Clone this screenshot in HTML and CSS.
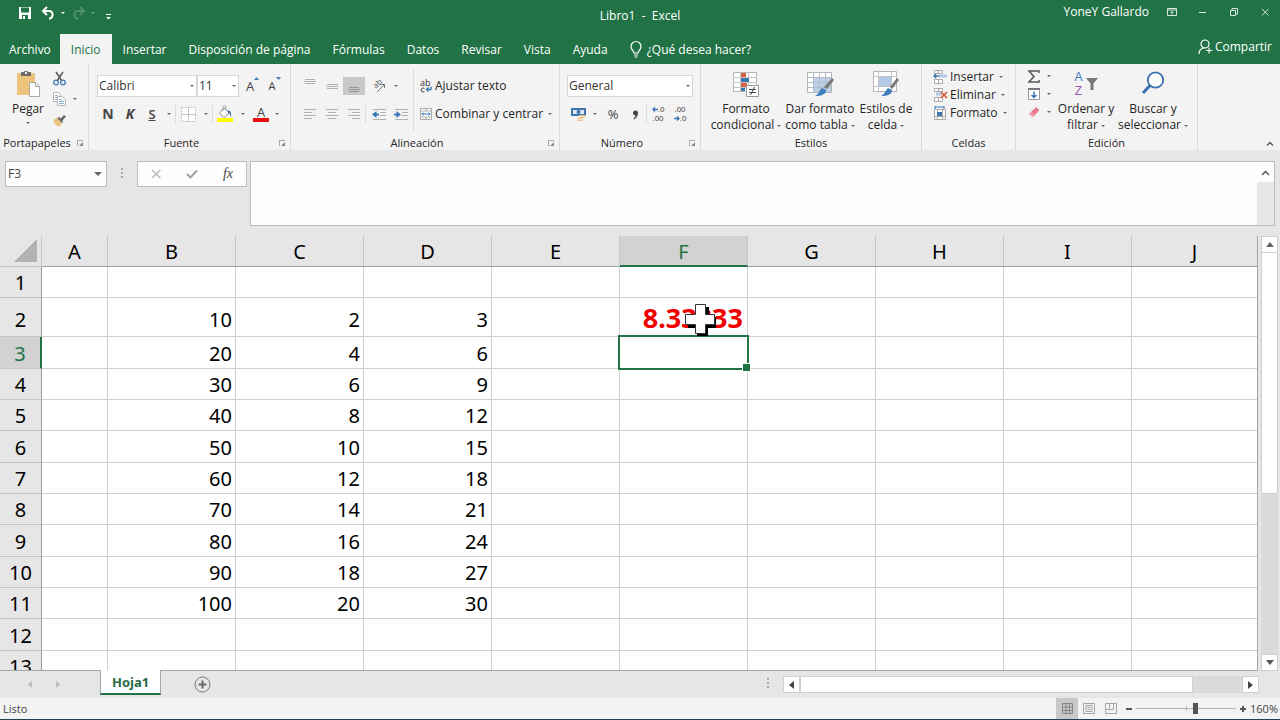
FILE: index.html
```html
<!DOCTYPE html>
<html lang="es">
<head>
    <meta charset="UTF-8">
    <meta name="viewport" content="width=device-width, initial-scale=1.0">
    <title>Libro1 - Excel</title>
    <link rel="stylesheet" href="styles.css">
</head>
<body>
    <header class="title-bar">
        <div class="quick-access">
            <button class="qa-btn" aria-label="Guardar"><svg width="14" height="14" viewBox="0 0 14 14"><path d="M1 1h12v12H1z" fill="#fff"/><path d="M3 1.500h8v5H3zM4 9h6v4H4z" fill="#217346"/><path d="M5 10h2v3H5z" fill="#fff"/></svg></button>
            <button class="qa-btn" aria-label="Deshacer"><svg width="15" height="14" viewBox="0 0 15 14"><path d="M2 5h7a4 4 0 0 1 0 7.500H8M6 1L2 5l4 4" fill="none" stroke="#fff" stroke-width="2"/></svg></button>
            <span class="caret light"></span>
            <button class="qa-btn" aria-label="Rehacer"><svg width="15" height="14" viewBox="0 0 15 14"><path d="M13 5H6a4 4 0 0 0 0 7.500h1M9 1l4 4-4 4" fill="none" stroke="#4d8f6b" stroke-width="2"/></svg></button>
            <span class="caret light faded"></span>
            <button class="qa-btn more" aria-label="Personalizar barra"><svg width="7" height="6" viewBox="0 0 7 6"><path d="M1 .5h5" stroke="#fff"/><path d="M1 3h5L3.500 5.500z" fill="#fff"/></svg></button>
        </div>
        <div class="doc-title">Libro1&nbsp; -&nbsp; Excel</div>
        <div class="window-area">
            <span class="user-name">YoneY Gallardo</span>
            <button class="win-btn" aria-label="Opciones de presentación"><svg width="10" height="8" viewBox="0 0 10 8"><path d="M.5.500h9v7h-9zM.500 2h9M5 6.500V3.500M3.500 5L5 3.500 6.500 5" fill="none" stroke="#d9e8df"/></svg></button>
            <button class="win-btn" aria-label="Minimizar"><svg width="8" height="8" viewBox="0 0 8 8"><path d="M0 4.500h7" stroke="#d9e8df"/></svg></button>
            <button class="win-btn" aria-label="Restaurar"><svg width="8" height="8" viewBox="0 0 8 8"><path d="M.5 2.500h5v5h-5zM2 2.500V.500h5.500v5.500H5.500" fill="none" stroke="#d9e8df"/></svg></button>
            <button class="win-btn" aria-label="Cerrar"><svg width="8" height="8" viewBox="0 0 8 8"><path d="M1 1l6.500 6.500M7.500 1L1 7.500" fill="none" stroke="#d9e8df"/></svg></button>
        </div>
    </header>

    <nav class="tabs">
        <a class="tab first" href="#">Archivo</a>
        <a class="tab active" href="#">Inicio</a>
        <a class="tab" href="#">Insertar</a>
        <a class="tab" href="#">Disposición de página</a>
        <a class="tab" href="#">Fórmulas</a>
        <a class="tab" href="#">Datos</a>
        <a class="tab" href="#">Revisar</a>
        <a class="tab" href="#">Vista</a>
        <a class="tab" href="#">Ayuda</a>
        <a class="tab tell-me" href="#"><svg width="12" height="17" viewBox="0 0 12 17"><path d="M4 12c0-2-3-3-3-6.500a5 5 0 0 1 10 0C11 9 8 10 8 12zM4 14h4M4.500 16h3" fill="none" stroke="#fff" stroke-width="1.200"/></svg>¿Qué desea hacer?</a>
        <a class="share" href="#"><svg width="15" height="16" viewBox="0 0 15 16"><circle cx="7" cy="5" r="4" fill="none" stroke="#fff" stroke-width="1.200"/><path d="M1 15c0-3 2-5.500 5-6M11 8.500v6M8 11.500h6.500" fill="none" stroke="#fff" stroke-width="1.200"/></svg>Compartir</a>
    </nav>

    <section class="ribbon">
        <div class="group g-clip">
            <div class="group-body">
                <button class="big-btn paste">
                    <svg width="24" height="27" viewBox="0 0 24 27"><path d="M1 3h18v22H1z" fill="#ecc27c"/><path d="M5 2h2.500a3 2.500 0 0 1 5 0H15v4H5z" fill="#6b6b6b"/><path d="M9 2h2v2H9z" fill="#f3f3f3"/><path d="M13.500 12.500h6l4 4v10h-10z" fill="#fff" stroke="#aaa"/><path d="M19.500 12.500v4h4" fill="none" stroke="#aaa"/></svg>
                    <span>Pegar</span>
                    <span class="caret"></span>
                </button>
                <div class="clip-col">
                    <button class="ic" aria-label="Cortar"><svg width="13" height="15" viewBox="0 0 13 15"><path d="M3 1l6 9M10 1L4 10" stroke="#555" stroke-width="1.500"/><circle cx="3" cy="11.500" r="2.300" fill="none" stroke="#4679b8" stroke-width="1.300"/><circle cx="10" cy="11.500" r="2.300" fill="none" stroke="#4679b8" stroke-width="1.300"/></svg></button>
                    <div class="pair"><button class="ic" aria-label="Copiar"><svg width="13" height="14" viewBox="0 0 13 14"><path d="M.5.500h5l2 2v7h-7z" fill="#fff" stroke="#b4b4b4"/><path d="M4.500 4.500h5l3 3v6h-8z" fill="#fff" stroke="#b4b4b4"/><path d="M2 3.500h3M2 5.500h2M2 7.500h2M6 7.500h3M6 9.500h5M6 11.500h5" stroke="#8fb3cc"/></svg></button><span class="caret"></span></div>
                    <button class="ic" aria-label="Copiar formato"><svg width="14" height="13" viewBox="0 0 14 13"><path d="M1 6l4-2 5 5-3 4-3-2-1-1-1-2z" fill="#ecc27c"/><path d="M5 4l2-1 1.500 1.500L12 1l2 1.500-3.500 4L11 8l-1 1z" fill="#666"/></svg></button>
                </div>
            </div>
            <div class="group-label">Portapapeles<i class="launcher"></i></div>
        </div>

        <div class="group g-font">
            <div class="group-body rows">
                <div class="row">
                    <label class="combo font-name"><select aria-label="Fuente"><option>Calibri</option></select></label>
                    <label class="combo font-size"><select aria-label="Tamaño de fuente"><option>11</option></select></label>
                    <button class="ic letter" aria-label="Aumentar tamaño">A<svg class="mark" width="5" height="3" viewBox="0 0 5 3"><path d="M0 3l2.500-3L5 3z" fill="#4679b8"/></svg></button>
                    <button class="ic letter small" aria-label="Disminuir tamaño">A<svg class="mark" width="5" height="3" viewBox="0 0 5 3"><path d="M0 0l2.500 3L5 0z" fill="#4679b8"/></svg></button>
                </div>
                <div class="row">
                    <button class="ic letter bold">N</button>
                    <button class="ic letter bold italic">K</button>
                    <button class="ic letter under">S</button>
                    <span class="caret"></span><i class="sep"></i>
                    <button class="ic borders" aria-label="Bordes"><svg width="15" height="15" viewBox="0 0 15 15"><path d="M.5.500h14v14H.500z" fill="#fff" stroke="#c4c4c4" stroke-dasharray="2 1"/><path d="M7.500 0v15M0 7.500h15" stroke="#c4c4c4"/></svg></button>
                    <span class="caret"></span><i class="sep"></i>
                    <button class="ic fill" aria-label="Color de relleno"><svg width="16" height="16" viewBox="0 0 16 16"><path d="M7 2l5 5-5 4.500L2.500 7z" fill="#fff" stroke="#888"/><path d="M6 5V1.500a1.500 1.500 0 0 1 3 0V4" fill="none" stroke="#999"/><path d="M11 4c3 1 3.500 3 3 7-1-1-1-4-3-5z" fill="#4679b8"/><path d="M0 12h16v4H0z" fill="#ff0"/></svg></button>
                    <span class="caret"></span>
                    <button class="ic font-color">A</button>
                    <span class="caret"></span>
                </div>
            </div>
            <div class="group-label">Fuente<i class="launcher"></i></div>
        </div>

        <div class="group g-align">
            <div class="group-body">
                <div class="rows">
                    <div class="row">
                        <button class="ic" aria-label="Alinear arriba"><svg width="12" height="14" viewBox="0 0 12 14"><path d="M1 .5h10M0 2.500h12M1 4.500h10" stroke="#b0b0b0"/></svg></button>
                        <button class="ic" aria-label="Alinear en el medio"><svg width="12" height="14" viewBox="0 0 12 14"><path d="M1 5.500h11M0 7.500h12M1 9.500h11" stroke="#b0b0b0"/></svg></button>
                        <button class="ic pressed" aria-label="Alinear abajo"><svg width="12" height="14" viewBox="0 0 12 14"><path d="M1 8.500h10M0 10.500h12M1 12.500h10" stroke="#969696"/></svg></button>
                        <button class="ic orient" aria-label="Orientación"><svg width="16" height="16" viewBox="0 0 16 16"><path d="M6 14l7-7M10 6.500h3.500V10" fill="none" stroke="#777"/><text transform="translate(5 11) rotate(-45)" font-size="8" fill="#555">ab</text></svg></button>
                        <span class="caret"></span>
                    </div>
                    <div class="row">
                        <button class="ic" aria-label="Alinear a la izquierda"><svg width="12" height="10" viewBox="0 0 12 10"><path d="M0 .5h12M0 3.500h8M0 6.500h12M0 9.500h8" stroke="#b0b0b0"/></svg></button>
                        <button class="ic" aria-label="Centrar"><svg width="12" height="10" viewBox="0 0 12 10"><path d="M0 .5h12M2 3.500h8M0 6.500h12M2 9.500h8" stroke="#b0b0b0"/></svg></button>
                        <button class="ic" aria-label="Alinear a la derecha"><svg width="12" height="10" viewBox="0 0 12 10"><path d="M0 .5h12M4 3.500h8M0 6.500h12M4 9.500h8" stroke="#b0b0b0"/></svg></button>
                        <i class="sep"></i>
                        <button class="ic" aria-label="Disminuir sangría"><svg width="14" height="11" viewBox="0 0 14 11"><path d="M1 .5h13M8 3.500h6M8 6.500h6M1 10.500h13" stroke="#b0b0b0"/><path d="M7 5.500H2" stroke="#3a76b8" stroke-width="2"/><path d="M0 5.500L4.500 2v7z" fill="#3a76b8"/></svg></button>
                        <button class="ic" aria-label="Aumentar sangría"><svg width="14" height="11" viewBox="0 0 14 11"><path d="M1 .5h13M8 3.500h6M8 6.500h6M1 10.500h13" stroke="#b0b0b0"/><path d="M0 5.500h5" stroke="#3a76b8" stroke-width="2"/><path d="M7 5.500L2.500 2v7z" fill="#3a76b8"/></svg></button>
                    </div>
                </div>
                <i class="sep tall"></i>
                <div class="rows">
                    <div class="row">
                        <button class="text-btn"><svg width="12" height="14" viewBox="0 0 12 14"><text y="7" font-size="9" fill="#333">ab</text><path d="M4.500 9.500A2 2 0 1 0 4.500 12.500" fill="none" stroke="#444"/><path d="M11 7.500v3H6.500M8.500 8.500l-2 2 2 2" fill="none" stroke="#3a76b8" stroke-width="1.300"/></svg>Ajustar texto</button>
                    </div>
                    <div class="row">
                        <button class="text-btn"><svg width="12" height="12" viewBox="0 0 12 12"><path d="M.5.500h11v11H.500zM.500 3h11M.500 9h11M6 0v3M6 9v3" fill="#fff" stroke="#aaa"/><path d="M1.500 6h9M3.500 4.500L2 6l1.500 1.500M8.500 4.500L10 6 8.500 7.500" fill="none" stroke="#3a76b8"/></svg>Combinar y centrar<span class="caret"></span></button>
                    </div>
                </div>
            </div>
            <div class="group-label">Alineación<i class="launcher"></i></div>
        </div>

        <div class="group g-number">
            <div class="group-body rows">
                <div class="row">
                    <label class="combo number-format"><select aria-label="Formato de número"><option>General</option></select></label>
                </div>
                <div class="row">
                    <button class="ic" aria-label="Formato de contabilidad"><svg width="15" height="15" viewBox="0 0 15 15"><path d="M0 1h15v8H0z" fill="#3f74ad"/><path d="M2 3h11v4H2z" fill="#dce8f4"/><circle cx="7.500" cy="5" r="2" fill="#3f74ad"/><path d="M8 8h6v3H8zM6 11h6v3H6z" fill="#ecc590"/><path d="M8 9.500h6M6 12.500h6" stroke="#f8e6c8"/></svg></button>
                    <span class="caret"></span>
                    <button class="ic percent">%</button>
                    <button class="ic" aria-label="Estilo millares"><svg width="7" height="11" viewBox="0 0 7 11"><path d="M1 4a2.500 2.500 0 1 1 5 0c0 3-1.500 5-4 6.500l-.7-.8C3 8.500 3.500 7.500 3.500 6.500 2 6.500 1 5.500 1 4z" fill="#444"/></svg></button>
                    <i class="sep"></i>
                    <button class="ic decimals" aria-label="Aumentar decimales"><span><svg width="6" height="5" viewBox="0 0 6 5"><path d="M6 2.500H1M3 .5l-2 2 2 2" fill="none" stroke="#3a76b8" stroke-width="1.300"/></svg>.0</span><span>.00</span></button>
                    <button class="ic decimals" aria-label="Disminuir decimales"><span>.00</span><span><svg width="6" height="5" viewBox="0 0 6 5"><path d="M0 2.500h5M3 .5l2 2-2 2" fill="none" stroke="#3a76b8" stroke-width="1.300"/></svg>.0</span></button>
                </div>
            </div>
            <div class="group-label">Número<i class="launcher"></i></div>
        </div>

        <div class="group g-styles">
            <div class="group-body">
                <button class="big-btn">
                    <svg width="26" height="27" viewBox="0 0 26 27"><path d="M.5 2.500h23v19H.500z" fill="#fff" stroke="#b4b4b4"/><path d="M0 7.500h24M0 12.500h24M0 17.500h24M7.500 2v20M15.500 2v20" stroke="#c4c4c4"/><path d="M8 3h5v4H8zM8 13h6v4H8z" fill="#d9603b"/><path d="M8 8h8v4H8zM8 18h4v3H8z" fill="#3f74ad"/><path d="M13.500 15.500h12v11h-12z" fill="#fff" stroke="#999"/><path d="M16 19.500h7M16 22.500h7M21.500 17l-4 8" stroke="#444"/></svg>
                    <span>Formato</span><span>condicional<i class="caret"></i></span>
                </button>
                <button class="big-btn">
                    <svg width="27" height="27" viewBox="0 0 27 27"><path d="M.5 2.500h24v20H.500z" fill="#fff" stroke="#b4b4b4"/><path d="M6 7h18v15H6z" fill="#bdd0ea"/><path d="M0 7.500h24M0 12.500h24M0 17.500h24M6.500 2v20M12.500 2v20M18.500 2v20" stroke="#b4bcc8"/><path d="M17 17l8-9 2 2-7 9z" fill="#777"/><path d="M15 18l4 2c0 4-4 6-11 6 4-2 4-5 7-8z" fill="#3f7dbd"/></svg>
                    <span>Dar formato</span><span>como tabla<i class="caret"></i></span>
                </button>
                <button class="big-btn narrow">
                    <svg width="26" height="27" viewBox="0 0 26 27"><path d="M.5 1.500h23v20H.500z" fill="#fff" stroke="#b4b4b4"/><path d="M0 6.500h24M0 16.500h24M5.500 1v20M18.500 1v20" stroke="#c4c4c4"/><path d="M6 7h12v9H6z" fill="#b4c8e8"/><path d="M17 17l7-9 2 2-7 9z" fill="#777"/><path d="M15 18l4 2c0 4-4 6-11 6 4-2 4-5 7-8z" fill="#3f7dbd"/></svg>
                    <span>Estilos de</span><span>celda<i class="caret"></i></span>
                </button>
            </div>
            <div class="group-label">Estilos</div>
        </div>

        <div class="group g-cells">
            <div class="group-body stack">
                <button class="text-btn"><svg width="14" height="14" viewBox="0 0 14 14"><path d="M1.500.500h8v3h-8zM1.500 9.500h8v4h-8zM5.500.500v3M5.500 9.500v4" fill="#fff" stroke="#aaa"/><path d="M6 4.500h8v3H6z" fill="#b4c8e4"/><path d="M6 6H1M3 4L1 6l2 2" fill="none" stroke="#3a76b8" stroke-width="1.300"/></svg>Insertar<span class="caret"></span></button>
                <button class="text-btn"><svg width="14" height="14" viewBox="0 0 14 14"><path d="M1.500.500h8v3h-8zM1.500 9.500h8v4h-8zM5.500.500v3M5.500 9.500v4" fill="#fff" stroke="#aaa"/><path d="M3 4.500h6v3H3z" fill="#b4c8e4"/><path d="M8 4l6 6M14 4l-6 6" stroke="#d4522e" stroke-width="1.500"/></svg>Eliminar<span class="caret"></span></button>
                <button class="text-btn"><svg width="14" height="14" viewBox="0 0 14 14"><path d="M1.500 3.500h11v10h-11zM1.500 10.500h11M4.500 3v10M9.500 3v10" fill="#fff" stroke="#aaa"/><path d="M4 6h5v4H4z" fill="#3f74ad"/><path d="M2 1h9M2 0v3M11 0v3" stroke="#3a76b8"/></svg>Formato<span class="caret"></span></button>
            </div>
            <div class="group-label">Celdas</div>
        </div>

        <div class="group g-edit">
            <div class="group-body">
                <div class="stack">
                    <button class="ic" aria-label="Autosuma"><svg width="12" height="13" viewBox="0 0 12 13"><path d="M11 3V1H1l5 5.500L1 12h10v-2" fill="none" stroke="#555" stroke-width="1.500"/></svg><span class="caret"></span></button>
                    <button class="ic" aria-label="Rellenar"><svg width="12" height="12" viewBox="0 0 12 12"><path d="M.5 1h11v10.500H.500z" fill="#fff" stroke="#999"/><path d="M0 1h12" stroke="#777" stroke-width="2"/><path d="M6 3.500v6M3.500 7L6 9.500 8.500 7" fill="none" stroke="#3a76b8" stroke-width="1.500"/></svg><span class="caret"></span></button>
                    <button class="ic" aria-label="Borrar"><svg width="12" height="12" viewBox="0 0 12 12"><path d="M8 1l3.500 3L5 11 1 8z" fill="#e8788c"/><path d="M3.500 6L7 9.500 5 11 1 8z" fill="#ee9eac"/></svg><span class="caret"></span></button>
                </div>
                <button class="big-btn sort">
                    <span class="sort-icon"><span class="az"><b>A</b><b>Z</b></span><svg width="12" height="12" viewBox="0 0 12 12"><path d="M0 0h12L7.500 5.500V12h-3V5.500z" fill="#777"/></svg></span>
                    <span>Ordenar y</span><span>filtrar<i class="caret"></i></span>
                </button>
                <button class="big-btn find">
                    <svg width="24" height="27" viewBox="0 0 24 27"><circle cx="14.500" cy="10" r="7.700" fill="#fff" stroke="#3a70ae" stroke-width="1.800"/><path d="M9 15.500L2 23" stroke="#3a70ae" stroke-width="3"/></svg>
                    <span>Buscar y</span><span>seleccionar<i class="caret"></i></span>
                </button>
            </div>
            <div class="group-label">Edición</div>
        </div>
        <button class="collapse" aria-label="Contraer la cinta"><svg width="8" height="5" viewBox="0 0 8 5"><path d="M1 4.500l3-3 3 3" fill="none" stroke="#555" stroke-width="1.300"/></svg></button>
    </section>

    <section class="formula-bar">
        <div class="name-box"><input type="text" value="F3" aria-label="Cuadro de nombres"><span class="caret wide"></span></div>
        <i class="dots"></i>
        <div class="formula-buttons">
            <button aria-label="Cancelar"><svg width="11" height="10" viewBox="0 0 11 10"><path d="M1 1l8.500 8M9.500 1L1 9" stroke="#b4b4b4" stroke-width="1.300"/></svg></button>
            <button aria-label="Introducir"><svg width="12" height="10" viewBox="0 0 12 10"><path d="M1 5l3.500 3.500L11 1.500" fill="none" stroke="#a0a0a0" stroke-width="2"/></svg></button>
            <button class="fx">fx</button>
        </div>
        <div class="formula-input">
            <textarea aria-label="Barra de fórmulas"></textarea>
            <button aria-label="Contraer barra"><svg width="9" height="6" viewBox="0 0 9 6"><path d="M1 5l3.500-3.500L8 5" fill="none" stroke="#666" stroke-width="1.700"/></svg></button>
        </div>
    </section>

    <main class="sheet">
        <div class="grid-wrap">
            <table class="grid">
                <colgroup><col class="c-head"><col class="c-a"><col class="c-n"><col class="c-n"><col class="c-n"><col class="c-n"><col class="c-n"><col class="c-n"><col class="c-n"><col class="c-n"><col></colgroup>
                <thead>
                    <tr><th class="corner"><svg width="24" height="24" viewBox="0 0 24 24"><path d="M23 0v23H0z" fill="#b2b2b2"/></svg></th><th>A</th><th>B</th><th>C</th><th>D</th><th>E</th><th class="selected">F</th><th>G</th><th>H</th><th>I</th><th>J</th></tr>
                </thead>
                <tbody>
                    <tr><th>1</th><td></td><td></td><td></td><td></td><td></td><td></td><td></td><td></td><td></td><td></td></tr>
                    <tr class="result-row"><th>2</th><td></td><td>10</td><td>2</td><td>3</td><td></td><td class="result">8.33333<svg class="cursor" width="32" height="32" viewBox="0 0 32 32"><path d="M13 3h11v10h7v11h-8v8H12v-8H3v-9h10z" fill="#000"/><path d="M10.500.500h10v10h9v10h-9v9h-10v-9h-10v-10h10z" fill="#fff" stroke="#333"/></svg></td><td></td><td></td><td></td><td></td></tr>
                    <tr><th class="selected">3</th><td></td><td>20</td><td>4</td><td>6</td><td></td><td class="active-cell"></td><td></td><td></td><td></td><td></td></tr>
                    <tr><th>4</th><td></td><td>30</td><td>6</td><td>9</td><td></td><td></td><td></td><td></td><td></td><td></td></tr>
                    <tr><th>5</th><td></td><td>40</td><td>8</td><td>12</td><td></td><td></td><td></td><td></td><td></td><td></td></tr>
                    <tr><th>6</th><td></td><td>50</td><td>10</td><td>15</td><td></td><td></td><td></td><td></td><td></td><td></td></tr>
                    <tr><th>7</th><td></td><td>60</td><td>12</td><td>18</td><td></td><td></td><td></td><td></td><td></td><td></td></tr>
                    <tr><th>8</th><td></td><td>70</td><td>14</td><td>21</td><td></td><td></td><td></td><td></td><td></td><td></td></tr>
                    <tr><th>9</th><td></td><td>80</td><td>16</td><td>24</td><td></td><td></td><td></td><td></td><td></td><td></td></tr>
                    <tr><th>10</th><td></td><td>90</td><td>18</td><td>27</td><td></td><td></td><td></td><td></td><td></td><td></td></tr>
                    <tr><th>11</th><td></td><td>100</td><td>20</td><td>30</td><td></td><td></td><td></td><td></td><td></td><td></td></tr>
                    <tr><th>12</th><td></td><td></td><td></td><td></td><td></td><td></td><td></td><td></td><td></td><td></td></tr>
                    <tr><th>13</th><td></td><td></td><td></td><td></td><td></td><td></td><td></td><td></td><td></td><td></td></tr>
                </tbody>
            </table>
        </div>
        <div class="v-scroll">
            <button aria-label="Subir"><svg width="8" height="5" viewBox="0 0 8 5"><path d="M0 5l4-5 4 5z" fill="#666"/></svg></button>
            <div class="thumb"></div>
            <div class="track"></div>
            <button aria-label="Bajar"><svg width="8" height="5" viewBox="0 0 8 5"><path d="M0 0l4 5 4-5z" fill="#555"/></svg></button>
        </div>
    </main>

    <section class="sheet-tabs">
        <div class="tab-nav">
            <button aria-label="Hoja anterior"><svg width="4" height="7" viewBox="0 0 4 7"><path d="M4 0v7L0 3.500z" fill="#bbb"/></svg></button>
            <button aria-label="Hoja siguiente"><svg width="4" height="7" viewBox="0 0 4 7"><path d="M0 0v7l4-3.500z" fill="#bbb"/></svg></button>
        </div>
        <a class="sheet-tab" href="#">Hoja1</a>
        <button class="add-sheet" aria-label="Hoja nueva"><svg width="17" height="17" viewBox="0 0 17 17"><circle cx="8.500" cy="8.500" r="7.500" fill="none" stroke="#777"/><path d="M8.500 4.500v8M4.500 8.500h8" stroke="#666" stroke-width="2"/></svg></button>
        <div class="h-area">
            <i class="dots"></i>
            <div class="h-scroll">
                <button aria-label="Izquierda"><svg width="5" height="8" viewBox="0 0 5 8"><path d="M5 0v8L0 4z" fill="#444"/></svg></button>
                <div class="thumb"></div>
                <div class="track"></div>
                <button aria-label="Derecha"><svg width="5" height="8" viewBox="0 0 5 8"><path d="M0 0v8l5-4z" fill="#444"/></svg></button>
            </div>
        </div>
    </section>

    <footer class="status-bar">
        <span>Listo</span>
        <div class="views">
            <button class="pressed" aria-label="Normal"><svg width="11" height="11" viewBox="0 0 11 11"><path d="M.5.500h10v10H.500zM4 0v11M7.500 0v11M0 4h11M0 7.500h11" fill="none" stroke="#858585"/></svg></button>
            <button aria-label="Diseño de página"><svg width="12" height="11" viewBox="0 0 12 11"><path d="M.5.500h11v10H.500zM3 2.500h6v6H3zM4.500 4.500h3M4.500 6.500h3" fill="none" stroke="#a5a5a5"/></svg></button>
            <button aria-label="Vista previa de salto de página"><svg width="12" height="11" viewBox="0 0 12 11"><path d="M.5.500h11v10H.500zM4.500 0v6M.500 6.500h8v-6" fill="none" stroke="#a5a5a5"/></svg></button>
        </div>
        <div class="zoom">
            <button aria-label="Alejar"><svg width="8" height="8" viewBox="0 0 8 8"><path d="M1 4h6" stroke="#555" stroke-width="2"/></svg></button>
            <input type="range" min="0" max="100" value="60" aria-label="Zoom">
            <button aria-label="Acercar"><svg width="8" height="8" viewBox="0 0 8 8"><path d="M1 4h6M4 1v6" stroke="#555" stroke-width="2"/></svg></button>
            <span>160%</span>
        </div>
    </footer>
</body>
</html>
```

FILE: styles.css
```css
* {
    box-sizing: border-box;
}

body {
    margin: 0;
    height: 100vh;
    display: flex;
    flex-direction: column;
    overflow: hidden;
    background-color: #e6e6e6;
    color: #262626;
    font-family: "Open Sans", "Noto Sans", sans-serif;
    font-size: 12px;
    line-height: 16px;
    border-bottom: 1px solid #1d4350;
}

button {
    display: flex;
    align-items: center;
    justify-content: center;
    padding: 0;
    border: none;
    background: none;
    color: inherit;
    font: inherit;
}

a {
    color: inherit;
    text-decoration: none;
}

svg {
    flex: none;
    display: block;
    overflow: visible;
}

.caret {
    flex: none;
    display: inline-block;
    border: 2px solid transparent;
    border-top-color: #666;
    border-bottom: none;
}

.caret.light {
    border-top-color: #fff;
}

.caret.faded {
    opacity: 0.4;
}

.caret.wide {
    border-width: 4px;
    border-bottom: none;
}

/* Title bar */
.title-bar {
    flex: none;
    height: 34px;
    display: grid;
    grid-template-columns: 1fr auto 1fr;
    align-items: start;
    background-color: #217346;
    color: #fff;
}

.quick-access {
    display: flex;
    align-items: center;
    padding: 6px 0 0 17px;
    gap: 5px;
}

.qa-btn {
    width: 15px;
    height: 14px;
}

.qa-btn + .qa-btn {
    margin-left: 4px;
}

.caret + .qa-btn {
    margin-left: 1px;
}

.qa-btn.more {
    align-self: end;
    height: 6px;
}

.doc-title {
    padding-top: 8px;
}

.window-area {
    display: flex;
    align-items: center;
    justify-content: flex-end;
    padding: 4px 0 0;
}

.user-name {
    margin-right: 7px;
}

.win-btn {
    width: 31px;
    height: 16px;
}

/* Ribbon tabs */
.tabs {
    flex: none;
    height: 30px;
    display: flex;
    background-color: #217346;
    color: #fff;
}

.tab {
    display: flex;
    align-items: center;
    padding: 1px 11px 0;
}

.tab.first {
    padding: 1px 9px 0;
}

.tab.active {
    background-color: #f3f3f3;
    color: #217346;
}

.tell-me {
    gap: 5px;
}

.share {
    display: flex;
    align-items: center;
    gap: 2px;
    height: 26px;
    margin-left: auto;
    padding-right: 8px;
}

/* Ribbon */
.ribbon {
    flex: none;
    height: 86px;
    display: flex;
    background-color: #f3f3f3;
}

.group {
    flex: none;
    display: flex;
    flex-direction: column;
    border-right: 1px solid #dadada;
}

.g-clip { width: 89px; }
.g-font { width: 202px; }
.g-align { width: 269px; }
.g-number { width: 141px; }
.g-styles { width: 221px; }
.g-cells { width: 94px; }
.g-edit { width: 182px; }

.group-body {
    flex: 1;
    display: flex;
    align-items: flex-start;
}

.group-label {
    display: flex;
    align-items: center;
    justify-content: center;
    height: 15px;
    font-size: 11px;
    position: relative;
}

.g-clip .group-label {
    padding-right: 14px;
}

.g-font .group-label,
.g-align .group-label,
.g-number .group-label {
    padding-right: 16px;
}

.launcher {
    position: absolute;
    right: 5px;
    top: 5px;
    width: 6px;
    height: 6px;
    border: 1px solid #aaa;
    border-right: none;
    border-bottom: none;
}

.launcher::after {
    content: "";
    position: absolute;
    right: 0;
    bottom: 0;
    border: 2px solid #888;
    border-top-color: transparent;
    border-left-color: transparent;
}

.rows {
    display: flex;
    flex-direction: column;
    gap: 6px;
    padding-top: 11px;
}

.row {
    display: flex;
    align-items: center;
    height: 22px;
}

.ic {
    position: relative;
    width: 22px;
    height: 18px;
    color: #444;
}

.row .ic + .caret {
    margin: 0 4px;
}

.sep {
    width: 1px;
    height: 18px;
    background-color: #dcdcdc;
}

.sep.tall {
    height: 62px;
    margin-top: 5px;
}

.pressed {
    background-color: #c8c8c8;
}

.big-btn {
    flex-direction: column;
    justify-content: flex-start;
    width: 74px;
    padding-top: 6px;
    white-space: nowrap;
}

.big-btn > svg {
    margin-bottom: 4px;
}

.big-btn span .caret {
    margin-left: 3px;
    vertical-align: middle;
}

.big-btn.paste {
    width: 56px;
}

.big-btn.paste > .caret {
    margin-top: 5px;
}

.big-btn.narrow {
    width: 58px;
}

.clip-col {
    display: flex;
    flex-direction: column;
    gap: 3px;
    padding-top: 5px;
}

.clip-col .ic {
    width: 6px;
}

.pair {
    display: flex;
    align-items: center;
    gap: 11px;
}

.g-font .group-body {
    align-items: stretch;
    padding-left: 8px;
}

.combo {
    position: relative;
    display: block;
    height: 22px;
}

.combo select {
    width: 100%;
    height: 100%;
    padding: 0 1px;
    border: 1px solid #d6d6d6;
    border-radius: 0;
    background-color: #fff;
    color: #333;
    font: inherit;
    appearance: none;
}

.combo::after {
    content: "";
    position: absolute;
    right: 3px;
    top: 10px;
    border: 2px solid transparent;
    border-top-color: #666;
    border-bottom: none;
}

.font-name { width: 100px; }
.font-size { width: 42px; }
.number-format { width: 126px; }

.letter {
    font-size: 13px;
}

.letter.small {
    font-size: 11px;
}

.letter .mark {
    position: absolute;
    right: 2px;
    top: 0;
}

.letter.bold {
    font-size: 14px;
    font-weight: 700;
}

.letter.italic {
    font-style: italic;
}

.letter.under {
    font-weight: 600;
    text-decoration: underline;
}

.borders,
.fill {
    width: 24px;
}

.font-color {
    width: 16px;
    height: 16px;
    margin: 0 2px 0 4px;
    border-bottom: 4px solid #e81010;
    font-size: 13px;
    line-height: 12px;
}

.g-align .rows {
    padding-left: 8px;
}

.g-align .sep + .rows {
    padding-left: 6px;
}

.g-align .orient {
    margin-left: 3px;
}

.g-align .row .sep + .ic {
    margin-left: 2px;
}

.g-align .sep.tall {
    margin-left: 1px;
}

.text-btn {
    gap: 3px;
    height: 18px;
    white-space: nowrap;
}

.text-btn .caret {
    margin-left: 2px;
}

.g-number .group-body {
    padding-left: 7px;
}

.g-number .row .caret + .ic {
    margin-left: 1px;
}

.percent {
    font-size: 13px;
}

.decimals {
    flex-direction: column;
    font-family: "Liberation Sans", sans-serif;
    font-size: 8px;
    line-height: 9px;
}

.decimals span {
    display: flex;
    align-items: center;
}

.g-styles .group-body {
    padding-left: 8px;
}

.stack {
    display: flex;
    flex-direction: column;
    align-items: flex-start;
    padding-top: 3px;
}

.g-cells .stack {
    padding: 4px 0 0 11px;
}

.g-edit .stack {
    padding-left: 12px;
}

.stack .ic {
    gap: 7px;
    justify-content: flex-start;
}

.big-btn.sort {
    width: 72px;
}

.big-btn.find {
    width: 62px;
}

.sort-icon {
    display: flex;
    align-items: center;
    gap: 3px;
    height: 27px;
    margin-bottom: 4px;
}

.az {
    display: flex;
    flex-direction: column;
}

.az b {
    color: #3a76b8;
    font-family: "Liberation Sans", sans-serif;
    font-size: 12px;
    font-weight: 400;
    line-height: 14px;
}

.az b + b {
    color: #9a57b0;
}

.collapse {
    align-self: flex-end;
    width: 20px;
    height: 14px;
    margin-left: auto;
}

/* Formula bar */
.formula-bar {
    flex: none;
    height: 86px;
    display: flex;
    align-items: flex-start;
    padding: 11px 5px 10px;
}

.name-box {
    width: 102px;
    height: 26px;
    display: flex;
    align-items: center;
    padding-right: 4px;
    border: 1px solid #bcbcbc;
    background-color: #fdfdfd;
}

.name-box input {
    flex: 1;
    min-width: 0;
    padding: 0 2px;
    border: none;
    background: none;
    color: #444;
    font: inherit;
}

.dots {
    width: 2px;
    height: 12px;
    background: repeating-linear-gradient(#aaa 0 2px, transparent 2px 4px);
}

.formula-bar .dots {
    margin: 7px 14px 0 14px;
}

.formula-buttons {
    width: 110px;
    height: 26px;
    display: flex;
    justify-content: space-around;
    border: 1px solid #bcbcbc;
    background-color: #fdfdfd;
}

.formula-buttons button {
    width: 24px;
}

.formula-buttons .fx {
    color: #444;
    font-family: "Liberation Serif", serif;
    font-size: 14px;
    font-style: italic;
}

.formula-input {
    flex: 1;
    height: 65px;
    display: flex;
    margin-left: 3px;
    border: 1px solid #bcbcbc;
    background-color: #fdfdfd;
}

.formula-input textarea {
    flex: 1;
    border: none;
    background: none;
    resize: none;
    font: inherit;
}

.formula-input button {
    align-items: flex-start;
    width: 17px;
    padding-top: 8px;
    background: linear-gradient(#fdfdfd 20px, #e6e6e6 20px);
}

/* Sheet */
.sheet {
    flex: 1;
    min-height: 0;
    display: flex;
    gap: 3px;
    padding-right: 2px;
}

.grid-wrap {
    flex: 1;
    overflow: hidden;
    border-right: 1px solid #a6a6a6;
    border-bottom: 1px solid #a6a6a6;
}

.grid {
    width: 100%;
    table-layout: fixed;
    border-collapse: separate;
    border-spacing: 0;
    color: #000;
    font-family: "Noto Sans", "Open Sans", sans-serif;
    font-size: 20px;
    line-height: 24px;
}

.c-head { width: 42px; }
.c-a { width: 66px; }
.c-n { width: 128px; }

.grid th,
.grid td {
    height: 31px;
    padding: 2px 0 0;
    border-right: 1px solid #d0d0d0;
    border-bottom: 1px solid #d0d0d0;
}

.grid tr > :last-child {
    border-right: none;
}

.grid th {
    background-color: #e6e6e6;
    border-color: #c4c4c4;
    font-weight: 400;
}

.grid thead th {
    border-bottom-color: #9c9c9c;
}

.grid tbody th {
    border-right-color: #9c9c9c;
}

.grid tbody tr:nth-child(3n) > * {
    height: 32px;
}

.grid thead .corner {
    padding: 0 3px 3px 0;
    vertical-align: bottom;
    border-bottom-color: #c4c4c4;
}

.corner svg {
    margin-left: auto;
}

.grid td {
    position: relative;
    padding-right: 3px;
    background-color: #fff;
    text-align: right;
}

.grid thead .selected {
    background-color: #d2d2d2;
    border-bottom: 2px solid #217346;
    color: #217346;
}

.grid tbody .selected {
    background-color: #d2d2d2;
    border-right: 2px solid #217346;
    color: #217346;
}

.grid tbody .result-row > * {
    height: 39px;
    padding-top: 6px;
}

.grid .result-row .result {
    padding-top: 2px;
    padding-right: 4px;
    color: #f00000;
    font-size: 27px;
    font-weight: 700;
}

/* Mouse pointer over the result */
.cursor {
    position: absolute;
    left: 65px;
    top: 6px;
    z-index: 2;
}

.grid .active-cell {
    z-index: 1;
}

.active-cell::before {
    content: "";
    position: absolute;
    inset: -2px;
    border: 2px solid #217346;
}

.active-cell::after {
    content: "";
    position: absolute;
    right: -4px;
    bottom: -4px;
    width: 7px;
    height: 7px;
    border: 1px solid #fff;
    background-color: #217346;
}

.v-scroll {
    width: 17px;
    display: flex;
    flex-direction: column;
}

.v-scroll button {
    height: 17px;
    border: 1px solid #d0d0d0;
    background-color: #fff;
}

.v-scroll .thumb {
    flex: 3;
    background-color: #fff;
    border: 1px solid #d0d0d0;
    border-top: none;
}

.v-scroll .track {
    flex: 2;
    background-color: #dadada;
}

/* Sheet tabs */
.sheet-tabs {
    flex: none;
    height: 27px;
    display: flex;
    align-items: flex-start;
}

.tab-nav {
    width: 100px;
    height: 26px;
    display: flex;
    align-items: center;
    gap: 24px;
    padding-left: 28px;
}

/* Pulled up so the tab opens into the sheet above it */
.sheet-tab {
    z-index: 1;
    height: 25px;
    margin-top: -1px;
    padding: 4px 11px 0;
    border: 1px solid #a6a6a6;
    border-top: none;
    border-bottom: 2px solid #217346;
    background-color: #fff;
    color: #1f6b41;
    font-size: 13px;
    font-weight: 700;
}

.add-sheet {
    height: 26px;
    margin-left: 33px;
}

.h-area {
    flex: 0 1 513px;
    display: flex;
    gap: 14px;
    margin-left: auto;
    padding: 5px 21px 0 0;
}

.h-area .dots {
    margin-top: 2px;
}

.h-scroll {
    flex: 1;
    height: 17px;
    display: flex;
}

.h-scroll button {
    width: 17px;
    border: 1px solid #d0d0d0;
    background-color: #fff;
}

.h-scroll .thumb {
    flex: 8;
    background-color: #fff;
    border: 1px solid #d0d0d0;
}

.h-scroll .track {
    flex: 1;
    background-color: #dadada;
}

/* Status bar */
.status-bar {
    flex: none;
    height: 21px;
    display: flex;
    align-items: center;
    padding: 0 2px 0 3px;
    background-color: #f3f3f3;
    color: #444;
    font-size: 11px;
}

.views {
    display: flex;
    margin-left: auto;
}

.views button {
    width: 22px;
    height: 21px;
}

.zoom {
    display: flex;
    align-items: center;
    gap: 3px;
    padding-left: 3px;
}

.zoom input {
    width: 100px;
    height: 12px;
    margin: 0;
    background: linear-gradient(#b4b4b4, #b4b4b4) center / 100% 1px no-repeat,
        linear-gradient(#b4b4b4, #b4b4b4) center / 1px 5px no-repeat;
    appearance: none;
}

.zoom input::-webkit-slider-thumb {
    width: 5px;
    height: 11px;
    background-color: #555;
    appearance: none;
}
```
